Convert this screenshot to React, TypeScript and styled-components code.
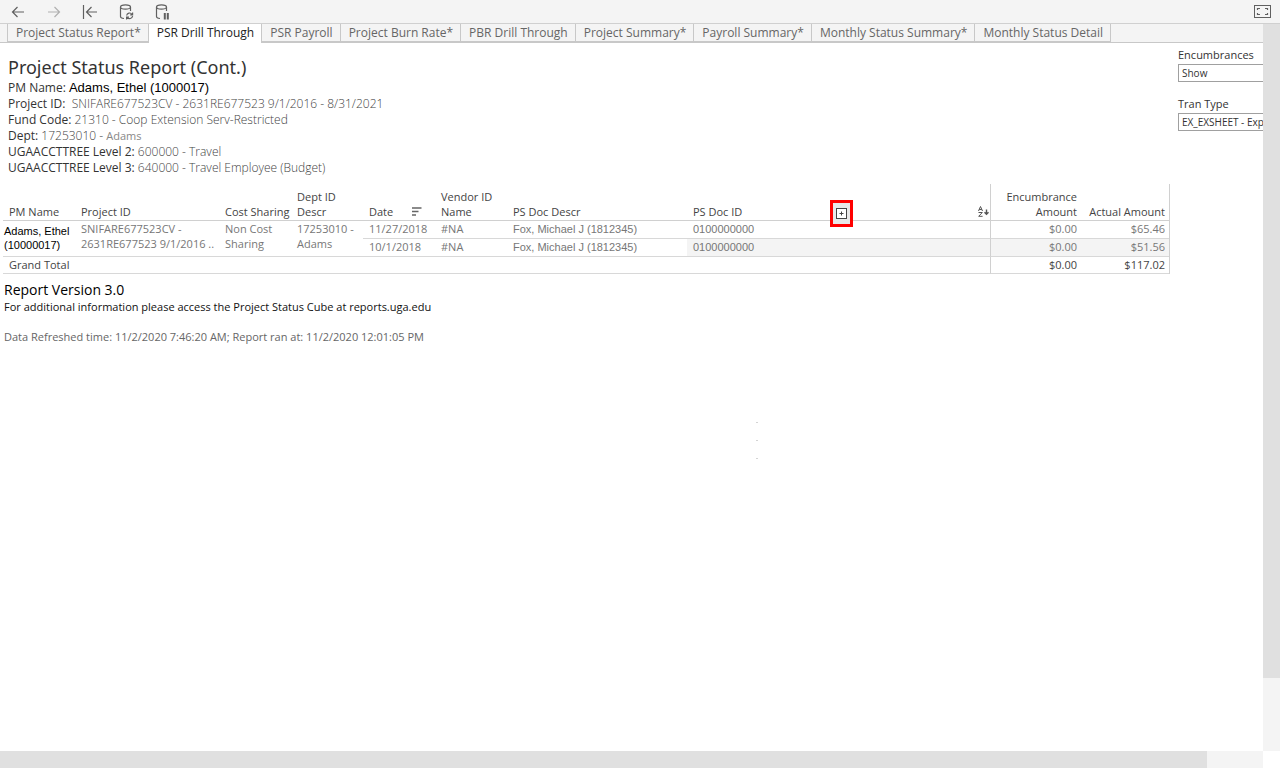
import React from "react";
import styled, { createGlobalStyle } from "styled-components";

const GlobalStyle = createGlobalStyle`
  *, *::before, *::after { box-sizing: border-box; }
  body {
    margin: 0;
    background: #fff;
    color: #333;
    font-family: "Open Sans", "Noto Sans", sans-serif;
    font-size: 11px;
    line-height: 16px;
  }
  button, select { font: inherit; color: inherit; }
`;

const Page = styled.div`
  display: flex;
  flex-direction: column;
  min-height: 100vh;
`;

const Toolbar = styled.header`
  display: flex;
  align-items: center;
  height: 24px;
  padding: 0 7px;
  background: #f4f4f4;
  border-bottom: 1px solid #d0d0d0;
`;

const ToolGroup = styled.div`
  display: flex;
  gap: 14px;
  flex: 1;
`;

const ToolButton = styled.button<{ $faded?: boolean }>`
  display: flex;
  align-items: center;
  justify-content: center;
  width: 22px;
  height: 22px;
  padding: 0;
  border: 0;
  background: none;
  color: ${(p) => (p.$faded ? "#b0b0b0" : "#606060")};
`;

const Workspace = styled.div`
  display: grid;
  grid-template-columns: minmax(0, 1fr) 17px;
  grid-template-rows: 1fr 17px;
  flex: 1;
`;

const View = styled.div`
  display: flex;
  flex-direction: column;
`;

const TabBar = styled.nav`
  display: flex;
  height: 19px;
  padding-left: 7px;
  background: #f4f4f4;
  border-bottom: 1px solid #c8c8c8;
`;

const Tab = styled.a<{ $active?: boolean }>`
  height: ${(p) => (p.$active ? 19 : 18)}px;
  padding: 0 7px 0 8px;
  border-right: 1px solid #c8c8c8;
  border-bottom: ${(p) => (p.$active ? "0" : "1px solid #c8c8c8")};
  background: ${(p) => (p.$active ? "#fff" : "#f4f4f4")};
  color: ${(p) => (p.$active ? "#222" : "#666")};
  font-size: 12px;
  line-height: 17px;
  text-decoration: none;
  white-space: nowrap;
  &:first-child { border-left: 1px solid #c8c8c8; }
`;

const Content = styled.div`
  display: flex;
  flex: 1;
`;

const Report = styled.main`
  flex: 1;
  min-width: 0;
  padding: 12px 0 0 3px;
`;

const Filters = styled.aside`
  flex: 0 0 93px;
  padding: 5px 0 0 8px;
  overflow: hidden;
`;

const Filter = styled.label`
  display: block;
  height: 49px;
  color: #333;
  font-size: 11px;
  line-height: 14px;
`;

const FilterSelect = styled.select`
  display: block;
  width: 140px;
  height: 18px;
  margin-top: 2px;
  padding: 0 3px;
  border: 1px solid #a0a0a0;
  border-radius: 0;
  background: #fff;
  appearance: none;
  font-size: 10px;
`;

const Heading = styled.section`
  padding-left: 5px;
  margin-bottom: 8px;
`;

const Title = styled.h1`
  margin: 0;
  font-family: "Noto Sans", sans-serif;
  font-size: 18px;
  font-weight: 400;
  line-height: 25px;
`;

const Field = styled.p`
  margin: 0;
  font-size: 12px;
  line-height: 16px;
  white-space: pre;
`;

const Value = styled.span`
  color: #444;
  font-weight: 300;
`;

const Person = styled.span`
  color: #000;
  font-family: "Liberation Sans", Arial, sans-serif;
  font-size: 13px;
`;

const Faint = styled.span`
  color: #888;
  font-size: 11px;
  font-weight: 400;
`;

const DataTable = styled.table`
  width: 100%;
  table-layout: fixed;
  border-collapse: separate;
  border-spacing: 0;
  border-right: 1px solid #d0d0d0;
`;

const Col = styled.col<{ $w?: number }>`
  width: ${(p) => (p.$w ? `${p.$w}px` : "auto")};
`;

const Head = styled.th<{ $amount?: boolean; $first?: boolean }>`
  height: 37px;
  padding: ${(p) => (p.$amount ? "0 4px 1px 0" : "0 0 1px 6px")};
  border-bottom: 1px solid #d0d0d0;
  border-left: ${(p) => (p.$first ? "1px solid #d0d0d0" : "0")};
  color: #444;
  font-size: 11px;
  font-weight: 400;
  line-height: 15px;
  text-align: ${(p) => (p.$amount ? "right" : "left")};
  vertical-align: bottom;
  white-space: nowrap;
`;

const HeadRow = styled.span<{ $inset?: number }>`
  display: flex;
  align-items: center;
  justify-content: space-between;
  height: 15px;
  padding-right: ${(p) => p.$inset ?? 1}px;
`;

const Cell = styled.td<{ $amount?: boolean; $first?: boolean; $band?: boolean; $total?: boolean }>`
  height: ${(p) => (p.$total ? 17 : 18)}px;
  padding: ${(p) => (p.$amount ? "0 4px 0 0" : "0 0 0 6px")};
  border-bottom: 1px solid #d8d8d8;
  border-left: ${(p) => (p.$first ? "1px solid #d0d0d0" : "0")};
  background: ${(p) => (p.$band ? "#f4f4f4" : "transparent")};
  color: ${(p) => (p.$total ? "#444" : "#777")};
  font-size: 11px;
  font-weight: 400;
  line-height: 15px;
  text-align: ${(p) => (p.$amount ? "right" : "left")};
  vertical-align: top;
  white-space: nowrap;
`;

const SansCell = styled(Cell)`
  font-family: "Liberation Sans", Arial, sans-serif;
  line-height: 16px;
`;

const PersonCell = styled(SansCell)`
  padding: 3px 0 0 1px;
  color: #000;
  font-size: 11px;
  line-height: 14px;
`;

const ExpandMark = styled.button`
  display: flex;
  align-items: center;
  justify-content: center;
  width: 23px;
  height: 27px;
  margin: 3px auto 0 88px;
  padding: 0;
  border: 3px solid #f00;
  background: #e8e8e8;
`;

const Notes = styled.footer`
  padding: 7px 0 0 1px;
`;

const Version = styled.h2`
  margin: 0;
  color: #000;
  font-size: 14px;
  font-weight: 400;
  line-height: 18px;
`;

const Note = styled.p<{ $muted?: boolean }>`
  margin: 0 0 14px;
  color: ${(p) => (p.$muted ? "#666" : "#111")};
  font-size: 11px;
  line-height: 16px;
`;

const Marks = styled.div`
  display: flex;
  flex-direction: column;
  gap: 17px;
  margin: 77px 0 0 753px;
`;

const Mark = styled.i`
  width: 2px;
  height: 1px;
  background: #d4d4d4;
`;

const VerticalBar = styled.div`
  background: #f4f4f4;
  &::before {
    content: "";
    display: block;
    height: 90%;
    background: #e0e0e0;
  }
`;

const HorizontalBar = styled.div`
  background: #f4f4f4;
  &::before {
    content: "";
    display: block;
    width: calc(100% - 56px);
    height: 17px;
    background: #e0e0e0;
  }
`;

const stroke = { fill: "none", stroke: "currentColor", strokeWidth: 1.2 };

const ArrowIcon = ({ right }: { right?: boolean }) => (
  <svg width="14" height="12" viewBox="0 0 14 12" {...stroke}>
    <path d={right ? "M1 6H12.5M7.5 1L12.5 6L7.5 11" : "M13 6H1.5M6.5 1L1.5 6L6.5 11"} />
  </svg>
);

const RevertIcon = () => (
  <svg width="16" height="14" viewBox="0 0 16 14" {...stroke}>
    <path d="M1.5 0V14M15 7H4.5M9.5 2L4.5 7L9.5 12" />
  </svg>
);

const DataIcon = ({ paused }: { paused?: boolean }) => (
  <svg width="16" height="16" viewBox="0 0 16 16" {...stroke}>
    <ellipse cx="7.5" cy="3" rx="5" ry="2.2" />
    <path d="M2.5 3V12.5C2.5 13.6 4 14.4 6 14.5M12.5 3V7" />
    {paused ? (
      <path d="M10.8 9V15.6M13.8 9V15.6" strokeWidth="2" />
    ) : (
      <path d="M8.6 11.5A3 3 0 0 1 14 10.3M14.6 8.4V10.8H12.2M14.6 12A3 3 0 0 1 9.2 13.3M8.6 15.4V13H11" />
    )}
  </svg>
);

const FullScreenIcon = () => (
  <svg width="17" height="13" viewBox="0 0 17 13" {...stroke}>
    <rect x="0.5" y="0.5" width="16" height="12" strokeWidth="1" />
    <path d="M3.5 5V3.5H6M11 3.5H13.5V5M13.5 8V9.5H11M6 9.5H3.5V8" />
  </svg>
);

const SortIcon = () => (
  <svg width="10" height="9" viewBox="0 0 10 9" fill="none" stroke="#666" strokeWidth="1.6">
    <path d="M0 1H9.5M0 4.5H6.5M0 8H4" />
  </svg>
);

const AlphaSortIcon = () => (
  <svg width="11" height="11" viewBox="0 0 11 11" fill="none" stroke="#555" strokeWidth="1">
    <path d="M0.5 5L2.5 0.5L4.5 5M1.2 3.5H3.8M0.5 6.5H4.3L0.7 10.3H4.6" />
    <path d="M8.5 3.5V8.5M6.5 6.3L8.5 8.3L10.5 6.3" strokeWidth="1.4" />
  </svg>
);

const PlusIcon = () => (
  <svg width="11" height="11" viewBox="0 0 11 11" fill="none" stroke="#444" strokeWidth="1">
    <rect x="0.5" y="0.5" width="10" height="10" fill="#fff" />
    <path d="M5.5 3.5V7.5M3.5 5.5H7.5" />
  </svg>
);

const TABS = [
  "Project Status Report*",
  "PSR Drill Through",
  "PSR Payroll",
  "Project Burn Rate*",
  "PBR Drill Through",
  "Project Summary*",
  "Payroll Summary*",
  "Monthly Status Summary*",
  "Monthly Status Detail",
];

const WIDTHS = [72, 144, 72, 72, 72, 72, 180, 0, 91, 88];

export default function App() {
  return (
    <Page>
      <GlobalStyle />
      <Toolbar>
        <ToolGroup>
          <ToolButton aria-label="Undo"><ArrowIcon /></ToolButton>
          <ToolButton aria-label="Redo" $faded><ArrowIcon right /></ToolButton>
          <ToolButton aria-label="Revert"><RevertIcon /></ToolButton>
          <ToolButton aria-label="Refresh data"><DataIcon /></ToolButton>
          <ToolButton aria-label="Pause updates"><DataIcon paused /></ToolButton>
        </ToolGroup>
        <ToolButton aria-label="Full screen"><FullScreenIcon /></ToolButton>
      </Toolbar>
      <Workspace>
        <View>
          <TabBar>
            {TABS.map((name) => (
              <Tab key={name} href="#" $active={name === "PSR Drill Through"}>{name}</Tab>
            ))}
          </TabBar>
          <Content>
            <Report>
              <Heading>
                <Title>Project Status Report (Cont.)</Title>
                <Field>PM Name: <Person>Adams, Ethel (1000017)</Person></Field>
                <Field>Project ID:  <Value>SNIFARE677523CV - 2631RE677523 9/1/2016 - 8/31/2021</Value></Field>
                <Field>Fund Code: <Value>21310 - Coop Extension Serv-Restricted</Value></Field>
                <Field>Dept: <Value>17253010 - <Faint>Adams</Faint></Value></Field>
                <Field>UGAACCTTREE Level 2: <Value>600000 - Travel</Value></Field>
                <Field>UGAACCTTREE Level 3: <Value>640000 - Travel Employee (Budget)</Value></Field>
              </Heading>
              <DataTable>
                <colgroup>
                  {WIDTHS.map((w, i) => <Col key={i} $w={w} />)}
                </colgroup>
                <thead>
                  <tr>
                    <Head>PM Name</Head>
                    <Head>Project ID</Head>
                    <Head>Cost Sharing</Head>
                    <Head>Dept ID<br />Descr</Head>
                    <Head><HeadRow $inset={13}>Date<SortIcon /></HeadRow></Head>
                    <Head>Vendor ID<br />Name</Head>
                    <Head>PS Doc Descr</Head>
                    <Head>
                      <HeadRow>
                        PS Doc ID
                        <ExpandMark aria-label="Expand PS Doc ID"><PlusIcon /></ExpandMark>
                        <AlphaSortIcon />
                      </HeadRow>
                    </Head>
                    <Head $amount $first>Encumbrance<br />Amount</Head>
                    <Head $amount>Actual Amount</Head>
                  </tr>
                </thead>
                <tbody>
                  <tr>
                    <PersonCell rowSpan={2}>Adams, Ethel<br />(10000017)</PersonCell>
                    <Cell rowSpan={2}>SNIFARE677523CV -<br />2631RE677523 9/1/2016 ..</Cell>
                    <Cell rowSpan={2}>Non Cost<br />Sharing</Cell>
                    <Cell rowSpan={2}>17253010 -<br />Adams</Cell>
                    <Cell>11/27/2018</Cell>
                    <Cell>#NA</Cell>
                    <SansCell>Fox, Michael J (1812345)</SansCell>
                    <SansCell>0100000000</SansCell>
                    <Cell $amount $first>$0.00</Cell>
                    <Cell $amount>$65.46</Cell>
                  </tr>
                  <tr>
                    <Cell>10/1/2018</Cell>
                    <Cell>#NA</Cell>
                    <SansCell>Fox, Michael J (1812345)</SansCell>
                    <SansCell $band>0100000000</SansCell>
                    <Cell $amount $first $band>$0.00</Cell>
                    <Cell $amount $band>$51.56</Cell>
                  </tr>
                  <tr>
                    <Cell $total colSpan={8}>Grand Total</Cell>
                    <Cell $total $amount $first>$0.00</Cell>
                    <Cell $total $amount>$117.02</Cell>
                  </tr>
                </tbody>
              </DataTable>
              <Notes>
                <Version>Report Version 3.0</Version>
                <Note>For additional information please access the Project Status Cube at reports.uga.edu</Note>
                <Note $muted>Data Refreshed time: 11/2/2020 7:46:20 AM; Report ran at: 11/2/2020 12:01:05 PM</Note>
              </Notes>
              <Marks aria-hidden="true"><Mark /><Mark /><Mark /></Marks>
            </Report>
            <Filters>
              <Filter>
                Encumbrances
                <FilterSelect><option>Show</option></FilterSelect>
              </Filter>
              <Filter>
                Tran Type
                <FilterSelect><option>EX_EXSHEET - Expense Sheet</option></FilterSelect>
              </Filter>
            </Filters>
          </Content>
        </View>
        <VerticalBar />
        <HorizontalBar />
      </Workspace>
    </Page>
  );
}
